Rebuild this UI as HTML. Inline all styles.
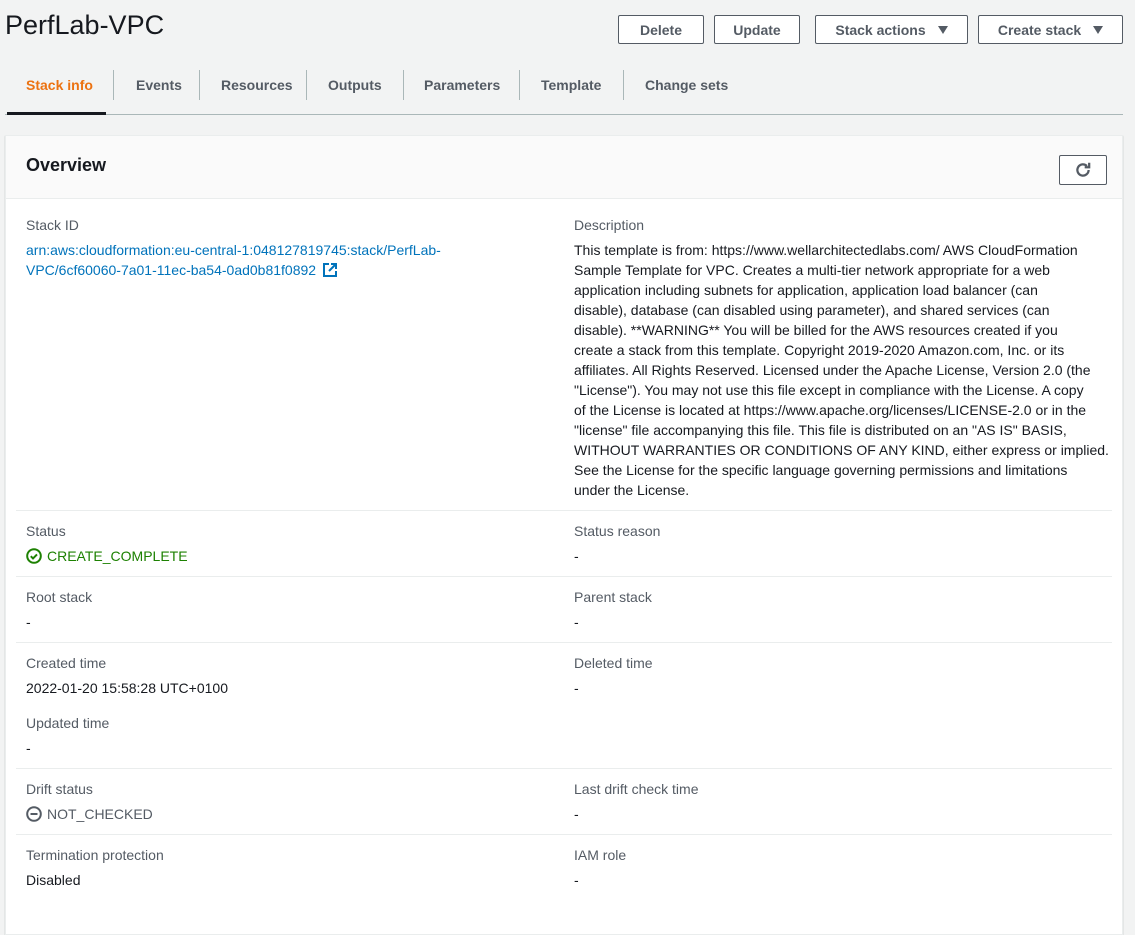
<!DOCTYPE html>
<html><head><meta charset="utf-8"><style>
*{margin:0;padding:0;box-sizing:border-box}
body{width:1135px;height:910px;background:#f2f3f3;font-family:"Liberation Sans",Arial,sans-serif;font-size:14px;color:#16191f;position:relative;overflow:hidden}
.a{position:absolute;white-space:nowrap;line-height:20px}
.btn{position:absolute;top:15px;height:29px;border:1px solid #545b64;border-radius:2px;background:#fff;color:#545b64;font-weight:bold;font-size:14px;display:flex;align-items:center;justify-content:center;gap:12px}
.tab{position:absolute;top:75px;font-weight:bold;color:#545b64;line-height:20px}
.vs{position:absolute;top:70px;height:30px;width:1px;background:#aab7b8}
.lbl{color:#545b64}
.sep{position:absolute;left:16px;width:1096px;height:1px;background:#eaeded}
.tri{width:0;height:0;border-left:5px solid transparent;border-right:5px solid transparent;border-top:8px solid #545b64}
</style></head><body>
<div class="a" style="left:5px;top:8px;font-size:27px;line-height:34px">PerfLab-VPC</div>
<div class="btn" style="left:618px;width:86px">Delete</div>
<div class="btn" style="left:714px;width:86px">Update</div>
<div class="btn" style="left:815px;width:153px">Stack actions <span class="tri"></span></div>
<div class="btn" style="left:978px;width:145px">Create stack <span class="tri"></span></div>

<div class="tab" style="left:26px;color:#ec7211">Stack info</div>
<div class="vs" style="left:113px"></div>
<div class="tab" style="left:136px">Events</div>
<div class="vs" style="left:199px"></div>
<div class="tab" style="left:221px">Resources</div>
<div class="vs" style="left:306px"></div>
<div class="tab" style="left:328px">Outputs</div>
<div class="vs" style="left:403px"></div>
<div class="tab" style="left:424px">Parameters</div>
<div class="vs" style="left:519px"></div>
<div class="tab" style="left:541px">Template</div>
<div class="vs" style="left:623px"></div>
<div class="tab" style="left:645px">Change sets</div>
<div style="position:absolute;left:5px;top:114px;width:1118px;height:1px;background:#aab7b8"></div>
<div style="position:absolute;left:7px;top:112px;width:99px;height:3px;background:#16191f"></div>

<div style="position:absolute;left:5px;top:135px;width:1118px;height:800px;background:#fff;border:1px solid #eaeded;box-shadow:0 1px 1px rgba(0,28,36,.3)"></div>
<div style="position:absolute;left:6px;top:136px;width:1116px;height:63px;background:#fafafa;border-bottom:1px solid #eaeded"></div>
<div class="a" style="left:26px;top:155px;font-size:18px;font-weight:bold">Overview</div>
<div style="position:absolute;left:1059px;top:155px;width:48px;height:30px;border:1px solid #545b64;border-radius:2px;background:#fff;display:flex;align-items:center;justify-content:center">
<svg width="18" height="18" viewBox="0 0 16 16"><path d="M13 8a5 5 0 1 1-1.5-3.6" fill="none" stroke="#545b64" stroke-width="2"/><path d="M13.5 1.5v4h-4" fill="none" stroke="#545b64" stroke-width="2"/></svg></div>

<div class="a lbl" style="left:26px;top:215px">Stack ID</div>
<div class="a" style="left:26px;top:240px;color:#0073bb">arn:aws:cloudformation:eu-central-1:048127819745:stack/PerfLab-<br>VPC/6cf60060-7a01-11ec-ba54-0ad0b81f0892 <svg width="14" height="14" viewBox="0 0 14 14" style="vertical-align:-2px;margin-left:3px"><path d="M6 1H1v12h12V8" fill="none" stroke="#0073bb" stroke-width="2"/><path d="M8 1h5v5M13 1L6 8" fill="none" stroke="#0073bb" stroke-width="2"/></svg></div>

<div class="a lbl" style="left:574px;top:215px">Description</div>
<div class="a" style="left:574px;top:240px">This template is from: https://www.wellarchitectedlabs.com/ AWS CloudFormation<br>Sample Template for VPC. Creates a multi-tier network appropriate for a web<br>application including subnets for application, application load balancer (can<br>disable), database (can disabled using parameter), and shared services (can<br>disable). **WARNING** You will be billed for the AWS resources created if you<br>create a stack from this template. Copyright 2019-2020 Amazon.com, Inc. or its<br>affiliates. All Rights Reserved. Licensed under the Apache License, Version 2.0 (the<br>"License"). You may not use this file except in compliance with the License. A copy<br>of the License is located at https://www.apache.org/licenses/LICENSE-2.0 or in the<br>"license" file accompanying this file. This file is distributed on an "AS IS" BASIS,<br>WITHOUT WARRANTIES OR CONDITIONS OF ANY KIND, either express or implied.<br>See the License for the specific language governing permissions and limitations<br>under the License.</div>

<div class="sep" style="top:510px"></div>
<div class="a lbl" style="left:26px;top:521px">Status</div>
<div class="a" style="left:26px;top:546px;color:#1d8102"><svg width="16" height="16" viewBox="0 0 16 16" style="vertical-align:-3px;margin-right:5px"><circle cx="8" cy="8" r="6.8" fill="none" stroke="#1d8102" stroke-width="2"/><path d="M4.8 8.2l2.2 2.2 4-4" fill="none" stroke="#1d8102" stroke-width="2"/></svg>CREATE_COMPLETE</div>
<div class="a lbl" style="left:574px;top:521px">Status reason</div>
<div class="a" style="left:574px;top:546px">-</div>

<div class="sep" style="top:576px"></div>
<div class="a lbl" style="left:26px;top:587px">Root stack</div>
<div class="a" style="left:26px;top:612px">-</div>
<div class="a lbl" style="left:574px;top:587px">Parent stack</div>
<div class="a" style="left:574px;top:612px">-</div>

<div class="sep" style="top:642px"></div>
<div class="a lbl" style="left:26px;top:653px">Created time</div>
<div class="a" style="left:26px;top:678px">2022-01-20 15:58:28 UTC+0100</div>
<div class="a lbl" style="left:26px;top:713px">Updated time</div>
<div class="a" style="left:26px;top:738px">-</div>
<div class="a lbl" style="left:574px;top:653px">Deleted time</div>
<div class="a" style="left:574px;top:678px">-</div>

<div class="sep" style="top:768px"></div>
<div class="a lbl" style="left:26px;top:779px">Drift status</div>
<div class="a" style="left:26px;top:804px;color:#545b64"><svg width="16" height="16" viewBox="0 0 16 16" style="vertical-align:-3px;margin-right:5px"><circle cx="8" cy="8" r="6.8" fill="none" stroke="#545b64" stroke-width="2"/><path d="M4.5 8h7" stroke="#545b64" stroke-width="2"/></svg>NOT_CHECKED</div>
<div class="a lbl" style="left:574px;top:779px">Last drift check time</div>
<div class="a" style="left:574px;top:804px">-</div>

<div class="sep" style="top:834px"></div>
<div class="a lbl" style="left:26px;top:845px">Termination protection</div>
<div class="a" style="left:26px;top:870px">Disabled</div>
<div class="a lbl" style="left:574px;top:845px">IAM role</div>
<div class="a" style="left:574px;top:870px">-</div>
</body></html>
